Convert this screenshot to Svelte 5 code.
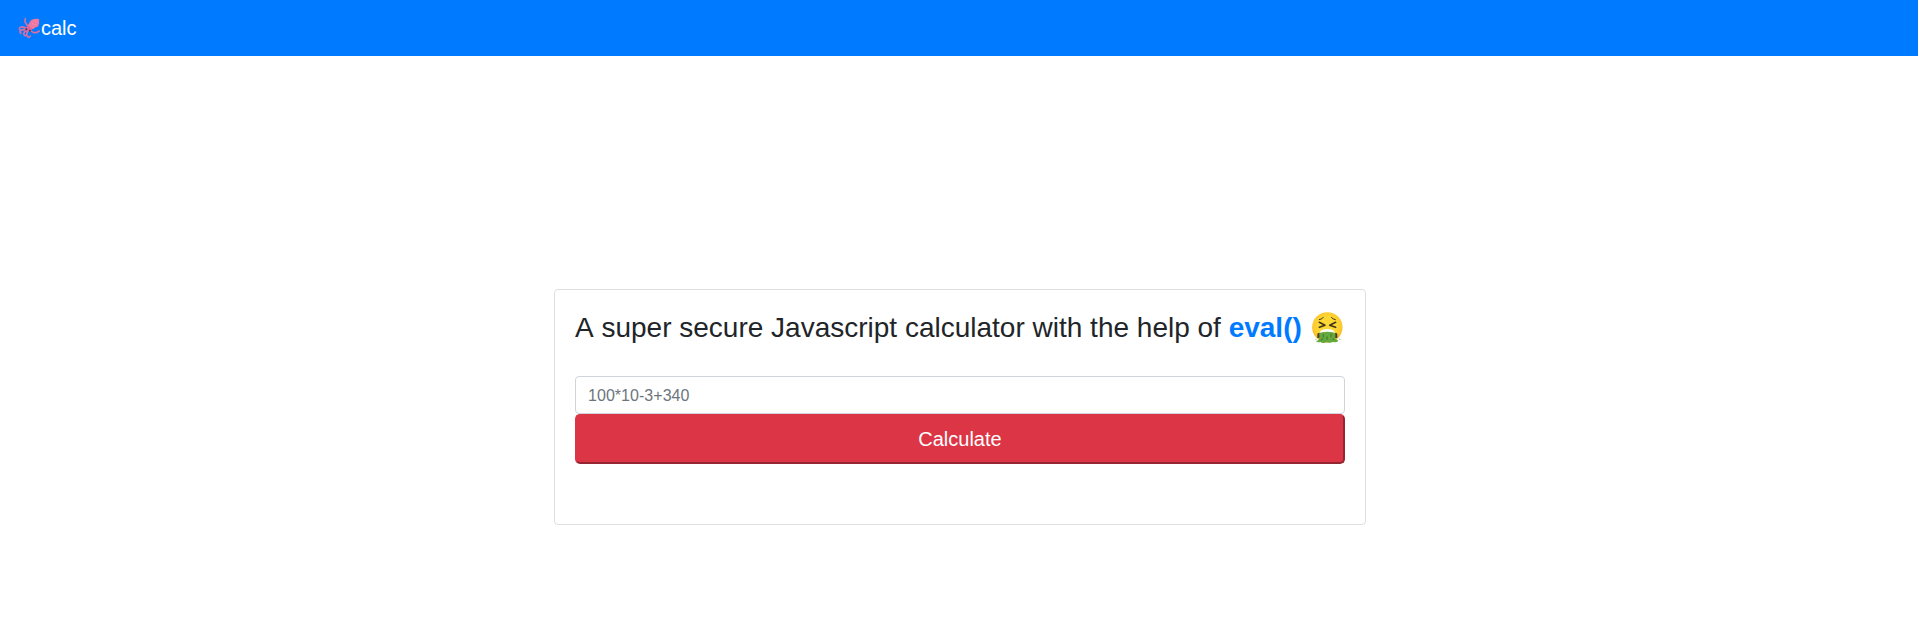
<script>
  let expression = $state('');
</script>

<div class="page">
  <nav>
    <a class="brand" href="/">
      <svg class="squid" viewBox="0 0 66 66" aria-hidden="true">
        <g fill="none" stroke="#dc6ea0" stroke-width="4.8" stroke-linecap="round">
          <path d="M30 32Q29 24 23 18Q19 11 22 5" />
          <path d="M26 35Q15 28 10 30Q3 32 5 38" />
          <path d="M26 39Q14 36 8 41Q3 46 9 49" />
          <path d="M27 41Q15 45 18 53Q21 59 25 54" />
          <path d="M31 41Q23 51 28 58Q33 65 37 57" />
          <path d="M36 39Q42 45 48 47Q56 48 64 42" />
        </g>
        <path fill="#ef769f" d="M32 22C34 16 37 12 40 9Q50 4 63 6Q65 18 60 29L54 30C49 34 44 37 38 38C30 36 27 29 32 22Z" />
        <path fill="#dc6297" d="M30 26Q38 30 42 36Q34 44 23 40Q20 34 30 26Z" />
        <circle cx="25" cy="37" r="3" fill="#493151" />
        <circle cx="36" cy="41" r="2.7" fill="#493151" />
        <circle cx="43" cy="20" r="1.5" fill="#ffacc8" />
        <circle cx="51" cy="22" r="1.5" fill="#ffacc8" />
        <circle cx="52" cy="13" r="1.5" fill="#ffacc8" />
      </svg><span>calc</span>
    </a>
  </nav>

  <main>
    <section class="card">
      <h3>
        <span>A super secure Javascript calculator with the help of <b>eval()</b></span>
        <svg class="face" viewBox="0 0 96 96" aria-hidden="true">
          <defs>
            <radialGradient id="skin" cx=".5" cy=".45" r=".55">
              <stop offset=".5" stop-color="#fdd835" />
              <stop offset=".85" stop-color="#fcc92d" />
              <stop offset="1" stop-color="#f2a51f" />
            </radialGradient>
          </defs>
          <circle cx="46" cy="46" r="45.5" fill="url(#skin)" />
          <g fill="none" stroke="#42351d" stroke-linecap="round" stroke-linejoin="round">
            <path d="M22 31L39 39.500L22 46M71 31L53 39.500L71 46" stroke-width="4.800" />
            <path d="M22 23Q31 22 34 16M70 23Q61 22 58 16" stroke-width="3" />
          </g>
          <path fill="#4e3a20" d="M16 78V66Q17 62 24 62H68Q75 62 76 66V78Z" />
          <path fill="#fff" d="M22 64Q26 51 46 51Q66 51 70 64Z" />
          <path fill="#65a83b" d="M22 64Q26 59 46 59Q66 59 70 64V80Q76 83 79 86Q75 92 63 90Q54 94 44 91Q31 95 25 90Q16 92 12 88Q20 85 22 80Z" />
          <path fill="none" stroke="#438332" stroke-width="4" stroke-linecap="round" d="M34 68V74M45 75V82M57 66V74M28 84L32 81M63 82L65 81" />
          <g fill="#65a83b"><circle cx="83" cy="81" r="1.5" /><circle cx="87" cy="83" r="1.3" /><circle cx="12" cy="82" r="1.5" /></g>
        </svg>
      </h3>
      <form onsubmit={(event) => event.preventDefault()}>
        <input type="text" placeholder="100*10-3+340" aria-label="Expression" bind:value={expression} />
        <button type="submit">Calculate</button>
      </form>
    </section>
  </main>
</div>

<style>
  .page {
    box-sizing: border-box;
    display: flex;
    flex-direction: column;
    height: 628px;
    background: #fff;
    color: #212529;
    font: 16px/1.5 "Liberation Sans", Arial, sans-serif;
  }
  nav {
    box-sizing: border-box;
    display: flex;
    align-items: center;
    height: 56px;
    padding: 0 16px;
    background: #007bff;
  }
  .brand {
    display: flex;
    align-items: center;
    color: #fff;
    font-size: 20px;
    line-height: 30px;
    text-decoration: none;
  }
  .squid {
    width: 22px;
    height: 22px;
    margin: 0 1px 0 2px;
  }
  main {
    display: flex;
    justify-content: center;
    padding: 233px 0 0 2px;
  }
  .card {
    box-sizing: border-box;
    width: 812px;
    height: 236px;
    padding: 20px;
    border: 1px solid #dfdfdf;
    border-radius: 4px;
  }
  h3 {
    display: flex;
    justify-content: space-between;
    height: 34px;
    margin: 0 0 32px;
    font-size: 28px;
    font-weight: 500;
    line-height: 36px;
    font-kerning: none;
    white-space: nowrap;
  }
  b {
    color: #007bff;
    font-weight: 700;
  }
  .face {
    width: 32px;
    height: 32px;
    margin: 2px 1px 0 0;
  }
  form {
    display: flex;
    flex-direction: column;
  }
  input {
    box-sizing: border-box;
    height: 38px;
    padding: 7px 12px 5px;
    border: 1px solid #ced4da;
    border-radius: 4px;
    background: #fff;
    color: #495057;
    font: inherit;
    letter-spacing: 0.04px;
  }
  input::placeholder {
    color: #6c757d;
    opacity: 1;
  }
  button {
    box-sizing: border-box;
    height: 50px;
    padding: 8px 16px;
    border: 2px solid;
    border-color: #dc3545 #942631 #942631 #dc3545;
    border-radius: 5px;
    background: #dc3545;
    color: #fff;
    font: 20px/30px "Liberation Sans", Arial, sans-serif;
  }
</style>
